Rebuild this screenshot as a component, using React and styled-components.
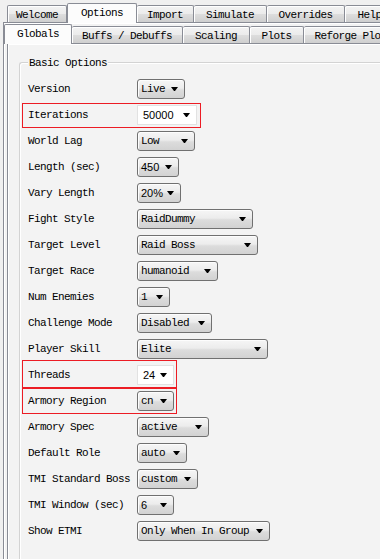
import React from "react";
import styled, { createGlobalStyle, css } from "styled-components";

const Global = createGlobalStyle`
  html, body {
    margin: 0;
    padding: 0;
    background: #f0f0f0;
    overflow: hidden;
  }
  body {
    font-family: "Liberation Mono", "DejaVu Sans Mono", monospace;
    font-size: 11px;
    letter-spacing: -0.6px;
    color: #000;
  }
`;

const Window = styled.div`
  width: 470px;
  height: 559px;
  overflow: hidden;
`;

const TabBar = styled.div`
  display: flex;
  align-items: flex-end;
  height: ${(p) => (p.$sub ? 20 : 22)}px;
  padding-left: ${(p) => (p.$sub ? 0 : 7)}px;
`;

const Tab = styled.div`
  box-sizing: border-box;
  width: ${(p) => p.$w}px;
  flex: none;
  height: 17px;
  display: flex;
  align-items: center;
  justify-content: center;
  white-space: nowrap;
  border: 1px solid #898c95;
  border-bottom: none;
  border-left-width: ${(p) => (p.$first ? 1 : 0)}px;
  border-radius: 2px 2px 0 0;
  background: linear-gradient(#f3f3f3 0%, #ebebeb 50%, #dddddd 51%, #cfcfcf 100%);
  box-shadow: inset 1px 1px 0 #fff;
  padding-top: 1px;

  ${(p) =>
    p.$active &&
    css`
      height: 20px;
      margin-bottom: -1px;
      position: relative;
      z-index: 1;
      border-left-width: 1px;
      border-right-width: 1px;
      background: #fcfcfc;
      box-shadow: none;
      padding-top: 0;
      padding-bottom: 2px;
    `}
`;

const Panel = styled.div`
  border: 1px solid #898c95;
  border-right: none;
  margin-left: ${(p) => p.$indent}px;
  background: #f3f3f3;
  box-shadow: inset 1px 1px 0 #fff;
  height: 600px;
`;

const GroupBox = styled.div`
  position: relative;
  margin: 18px 0 0 11px;
  border: 1px solid #d3d3d3;
  border-right: none;
  border-radius: 3px 0 0 0;
  padding: 16px 0 0 8px;
  box-shadow: inset 1px 1px 0 #fff;
  height: 560px;
`;

const GroupTitle = styled.span`
  position: absolute;
  top: -6px;
  left: 8px;
  padding: 0 1px;
  line-height: 13px;
  background: #f3f3f3;
`;

const Rows = styled.div`
  display: flex;
  flex-direction: column;
  gap: 6px;
`;

const Row = styled.div`
  position: relative;
  display: flex;
  align-items: center;
  width: fit-content;
  height: 20px;

  ${(p) =>
    p.$mark &&
    css`
      &::after {
        content: "";
        position: absolute;
        top: ${p.$mark[0]}px;
        right: ${p.$mark[1]}px;
        bottom: ${p.$mark[2]}px;
        left: ${p.$mark[3]}px;
        border: 1px solid #ec1c24;
        pointer-events: none;
      }
    `}
`;

const Label = styled.span`
  width: 109px;
  white-space: nowrap;
  line-height: 20px;
`;

const Combo = styled.div`
  box-sizing: border-box;
  width: ${(p) => p.$w}px;
  height: 20px;
  display: flex;
  align-items: center;
  border: 1px solid #707070;
  border-radius: 3px;
  background: linear-gradient(#f6f6f6 0%, #ececec 45%, #dcdcdc 55%, #d2d2d2 100%);
  box-shadow: inset 1px 1px 0 #fdfdfd;
  padding-left: 3px;
  white-space: nowrap;

  ${(p) =>
    p.$edit &&
    css`
      border-color: #e2e2e2;
      border-radius: 0;
      background: #fff;
      box-shadow: none;
      padding-left: 5px;
    `}
`;

const Value = styled.span`
  flex: 1;
  line-height: 18px;
  ${(p) =>
    p.$sans &&
    css`
      font-family: "Liberation Sans", Arial, sans-serif;
      letter-spacing: 0;
      font-size: 11px;
    `}
`;

const Arrow = styled.span`
  width: 1px;
  height: 0;
  margin-right: 6px;
  margin-top: -1px;
  border-left: 3px solid transparent;
  border-right: 3px solid transparent;
  border-top: 4px solid #000;
`;

const topTabs = [
  { t: "Welcome", w: 60 },
  { t: "Options", w: 70, active: true },
  { t: "Import", w: 57 },
  { t: "Simulate", w: 73 },
  { t: "Overrides", w: 78 },
  { t: "Help", w: 50 },
];

const subTabs = [
  { t: "Globals", w: 68, active: true },
  { t: "Buffs / Debuffs", w: 111 },
  { t: "Scaling", w: 67 },
  { t: "Plots", w: 54 },
  { t: "Reforge Plots", w: 100 },
];

const options = [
  { label: "Version", value: "Live", w: 48 },
  { label: "Iterations", value: "50000", w: 60, sans: true, edit: true, mark: [-2, -4, -3, -6] },
  { label: "World Lag", value: "Low", w: 58 },
  { label: "Length (sec)", value: "450", w: 42, sans: true },
  { label: "Vary Length", value: "20%", w: 44, sans: true },
  { label: "Fight Style", value: "RaidDummy", w: 116 },
  { label: "Target Level", value: "Raid Boss", w: 121 },
  { label: "Target Race", value: "humanoid", w: 81 },
  { label: "Num Enemies", value: "1", w: 33 },
  { label: "Challenge Mode", value: "Disabled", w: 75 },
  { label: "Player Skill", value: "Elite", w: 131 },
  { label: "Threads", value: "24", w: 37, sans: true, edit: true, mark: [-5, -3, -3, -6] },
  { label: "Armory Region", value: "cn", w: 37, mark: [-3, -3, -3, -6] },
  { label: "Armory Spec", value: "active", w: 72 },
  { label: "Default Role", value: "auto", w: 50 },
  { label: "TMI Standard Boss", value: "custom", w: 61 },
  { label: "TMI Window (sec)", value: "6", w: 37, sans: true },
  { label: "Show ETMI", value: "Only When In Group", w: 133 },
];

export default function App() {
  return (
    <Window>
      <Global />
      <TabBar>
        {topTabs.map((tab, i) => (
          <Tab key={tab.t} $w={tab.w} $active={tab.active} $first={i === 0}>
            {tab.t}
          </Tab>
        ))}
      </TabBar>
      <Panel $indent={3}>
        <TabBar $sub>
          {subTabs.map((tab, i) => (
            <Tab key={tab.t} $w={tab.w} $active={tab.active} $first={i === 0}>
              {tab.t}
            </Tab>
          ))}
        </TabBar>
        <Panel $indent={3}>
          <GroupBox>
            <GroupTitle>Basic Options</GroupTitle>
            <Rows>
              {options.map((o) => (
                <Row key={o.label} $mark={o.mark}>
                  <Label>{o.label}</Label>
                  <Combo $w={o.w} $edit={o.edit}>
                    <Value $sans={o.sans}>{o.value}</Value>
                    <Arrow />
                  </Combo>
                </Row>
              ))}
            </Rows>
          </GroupBox>
        </Panel>
      </Panel>
    </Window>
  );
}
